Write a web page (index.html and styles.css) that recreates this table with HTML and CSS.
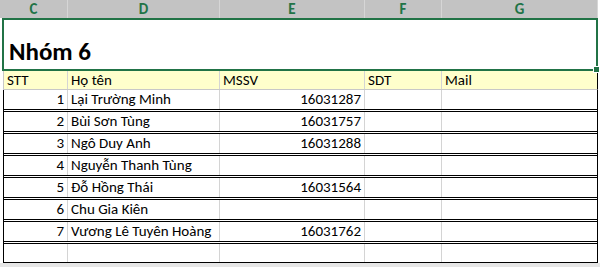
FILE: index.html
```html
<!DOCTYPE html>
<html lang="vi">
<head>
<meta charset="utf-8">
<title>Nhóm 6</title>
<link rel="stylesheet" href="styles.css">
</head>
<body>
<div class="sheet">
  <div class="colheads">
    <div class="ch">C</div>
    <div class="ch">D</div>
    <div class="ch">E</div>
    <div class="ch">F</div>
    <div class="ch">G</div>
  </div>
  <div class="title">
    <span class="title-text">Nhóm 6</span>
    <span class="handle"></span>
  </div>
  <div class="table">
    <div class="row head">
      <div class="cell">STT</div>
      <div class="cell">Họ tên</div>
      <div class="cell">MSSV</div>
      <div class="cell">SDT</div>
      <div class="cell">Mail</div>
    </div>
    <div class="row data">
      <div class="cell num">1</div>
      <div class="cell">Lại Trường Minh</div>
      <div class="cell num">16031287</div>
      <div class="cell"></div>
      <div class="cell"></div>
    </div>
    <div class="row data">
      <div class="cell num">2</div>
      <div class="cell">Bùi Sơn Tùng</div>
      <div class="cell num">16031757</div>
      <div class="cell"></div>
      <div class="cell"></div>
    </div>
    <div class="row data">
      <div class="cell num">3</div>
      <div class="cell">Ngô Duy Anh</div>
      <div class="cell num">16031288</div>
      <div class="cell"></div>
      <div class="cell"></div>
    </div>
    <div class="row data">
      <div class="cell num">4</div>
      <div class="cell">Nguyễn Thanh Tùng</div>
      <div class="cell num"></div>
      <div class="cell"></div>
      <div class="cell"></div>
    </div>
    <div class="row data">
      <div class="cell num">5</div>
      <div class="cell">Đỗ Hồng Thái</div>
      <div class="cell num">16031564</div>
      <div class="cell"></div>
      <div class="cell"></div>
    </div>
    <div class="row data">
      <div class="cell num">6</div>
      <div class="cell">Chu Gia Kiên</div>
      <div class="cell num"></div>
      <div class="cell"></div>
      <div class="cell"></div>
    </div>
    <div class="row data">
      <div class="cell num">7</div>
      <div class="cell">Vương Lê Tuyên Hoàng</div>
      <div class="cell num">16031762</div>
      <div class="cell"></div>
      <div class="cell"></div>
    </div>
    <div class="row last">
      <div class="cell"></div>
      <div class="cell"></div>
      <div class="cell"></div>
      <div class="cell"></div>
      <div class="cell"></div>
    </div>
  </div>
  <div class="footer"></div>
</div>
</body>
</html>
```

FILE: styles.css
```css
* { box-sizing: border-box; }

html, body {
  margin: 0;
  padding: 0;
  background: #ffffff;
}

body {
  font-family: "Carlito", "Lato", "Liberation Sans", sans-serif;
  font-size: 15px;
  color: #000;
}

.sheet {
  width: 600px;
  height: 267px;
  overflow: hidden;
  display: flex;
  flex-direction: column;
}

.colheads {
  display: grid;
  grid-template-columns: 68px 152px 145px 77px 156px;
  width: 598px;
  height: 18px;
  background: #c3c3c3;
}

.ch {
  border-right: 1px solid #d6d6d6;
  color: #217346;
  font-weight: bold;
  font-size: 15px;
  display: flex;
  align-items: center;
  justify-content: center;
  line-height: 1;
  padding-top: 1px;
}

.title {
  position: relative;
  margin-left: 2px;
  width: 596px;
  height: 53px;
  border: 2px solid #217346;
  display: flex;
  align-items: flex-end;
  padding: 0 0 5px 5px;
}

.title-text {
  font-weight: bold;
  font-size: 25px;
  line-height: 1;
}

.handle {
  position: absolute;
  right: -4px;
  bottom: -4px;
  width: 5px;
  height: 5px;
  background: #217346;
  border: 1px solid #fff;
  box-sizing: content-box;
}

.table {
  margin-left: 3px;
  width: 595px;
  display: flex;
  flex-direction: column;
}

.row {
  display: grid;
  grid-template-columns: 64px 152px 145px 77px 155px;
  border-left: 1px solid #000;
  border-right: 1px solid #000;
}

.cell {
  border-right: 1px solid #d4d4d4;
  display: flex;
  align-items: flex-end;
  padding: 0 3px 1px 3px;
  white-space: nowrap;
  overflow: visible;
  line-height: 1;
}

.cell:last-child { border-right: none; }

.cell.num { justify-content: flex-end; }

.row.head {
  height: 19px;
  background: #ffffcc;
  border-left-color: #c8c8c8;
  border-bottom: 1px solid #c8c8c8;
}

.row.head .cell { padding-bottom: 1px; }

.row.data {
  height: 22px;
  border-bottom: 3px double #000;
}

.row.data .cell { padding-bottom: 2px; }

.row.last {
  height: 19px;
  border-bottom: 1px solid #000;
}

.footer {
  flex: 1;
  background: #e6e6e6;
}
```
